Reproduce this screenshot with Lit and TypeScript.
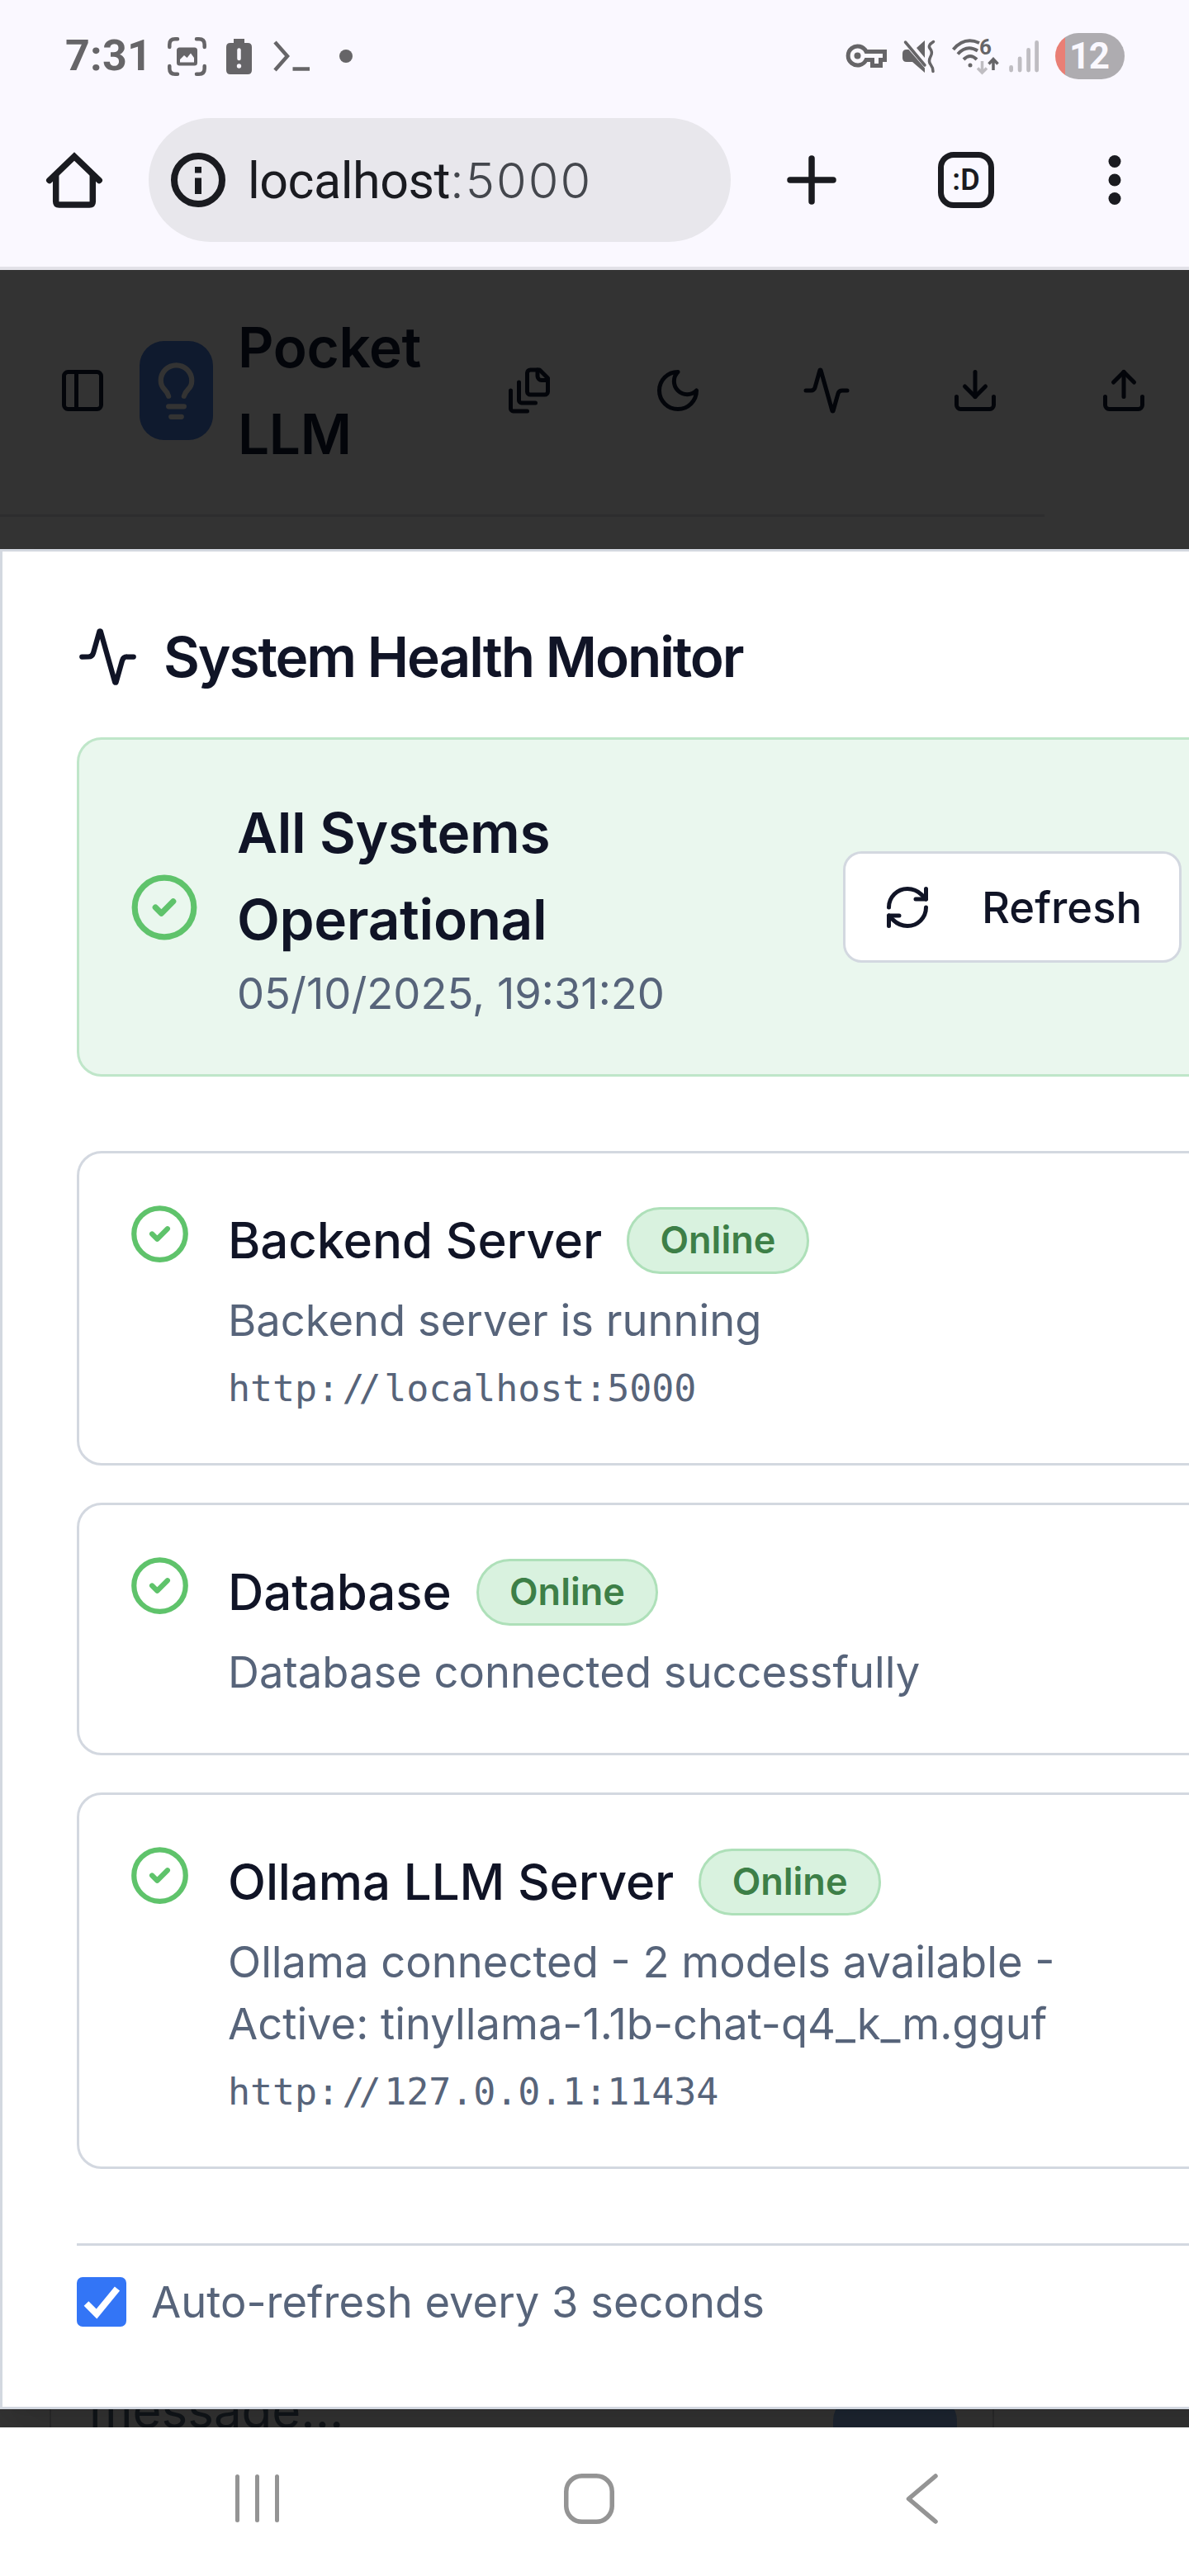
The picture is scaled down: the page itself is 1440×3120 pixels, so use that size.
import { LitElement, html, css, svg, nothing } from "lit";
import { customElement, property } from "lit/decorators.js";

const shapes: Record<string, unknown> = {
  panel: svg`<rect width="18" height="18" x="3" y="3" rx="2"/><path d="M9 3v18"/>`,
  bulb: svg`<path d="M15 14c.2-1 .7-1.7 1.5-2.5 1-.9 1.5-2.2 1.5-3.5A6 6 0 0 0 6 8c0 1 .2 2.2 1.5 3.5.7.7 1.3 1.5 1.5 2.5"/><path d="M9 18h6"/><path d="M10 22h4"/>`,
  files: svg`<path d="M21 7h-3a2 2 0 0 1-2-2V2"/><path d="M21 6v6.5c0 .8-.7 1.5-1.5 1.5h-7c-.8 0-1.5-.7-1.5-1.5v-9c0-.8.7-1.5 1.5-1.5H17Z"/><path d="M7 8v8.8c0 .3.2.6.4.8.2.2.5.4.8.4H15"/><path d="M3 12v8.8c0 .3.2.6.4.8.2.2.5.4.8.4H11"/>`,
  moon: svg`<path d="M12 3a6 6 0 0 0 9 9 9 9 0 1 1-9-9Z"/>`,
  activity: svg`<path d="M22 12h-2.48a2 2 0 0 0-1.93 1.46l-2.35 8.36a.25.25 0 0 1-.48 0L9.24 2.18a.25.25 0 0 0-.48 0l-2.35 8.36A2 2 0 0 1 4.49 12H2"/>`,
  download: svg`<path d="M21 15v4a2 2 0 0 1-2 2H5a2 2 0 0 1-2-2v-4"/><path d="m7 10 5 5 5-5"/><path d="M12 15V3"/>`,
  upload: svg`<path d="M21 15v4a2 2 0 0 1-2 2H5a2 2 0 0 1-2-2v-4"/><path d="m17 8-5-5-5 5"/><path d="M12 3v12"/>`,
  check: svg`<circle cx="12" cy="12" r="10"/><path d="m9 12 2 2 4-4"/>`,
  refresh: svg`<path d="M3 12a9 9 0 0 1 9-9 9.75 9.75 0 0 1 6.74 2.74L21 8"/><path d="M21 3v5h-5"/><path d="M21 12a9 9 0 0 1-9 9 9.75 9.75 0 0 1-6.74-2.74L3 16"/><path d="M8 16H3v5"/>`,
};

@customElement("line-icon")
export class LineIcon extends LitElement {
  @property() name = "";
  static styles = css`
    :host { display: block; flex: none; }
    svg { display: block; width: 100%; height: 100%; }
  `;
  render() {
    return html`<svg viewBox="0 0 24 24" fill="none" stroke="currentColor" stroke-width="2"
      stroke-linecap="round" stroke-linejoin="round">${shapes[this.name]}</svg>`;
  }
}

@customElement("browser-bar")
export class BrowserBar extends LitElement {
  static styles = css`
    :host { display: block; height: 323px; background: #faf8ff; border-bottom: 4px solid #e2e1e8; font-family: Roboto, "Liberation Sans", sans-serif; }
    svg { display: block; flex: none; overflow: visible; }
    .status { display: flex; align-items: center; justify-content: space-between; height: 136px; padding: 0 78px 0 79px; color: #666568; }
    .left, .right { display: flex; align-items: center; }
    .clock { width: 124px; font-size: 52px; font-weight: 700; line-height: 60px; letter-spacing: 0.2px; white-space: nowrap; }
    .alert { margin-left: 24px; }
    .prompt { margin-left: 26px; }
    .dot { margin-left: 36px; width: 16px; height: 16px; border-radius: 50%; background: currentColor; }
    .mute { margin-left: 19px; }
    .wifi { margin-left: 21px; }
    .six { font-size: 26px; font-weight: 700; }
    .signal { margin-left: 12px; }
    .battery { margin-left: 20px; width: 84px; height: 56px; box-sizing: border-box; border-radius: 28px; background: linear-gradient(90deg, #e97f75 12.5px, #aeacb0 12.5px); color: #faf8ff; font-size: 44px; font-weight: 700; line-height: 57px; padding-left: 17px; letter-spacing: -1.5px; }
    .tools { display: flex; align-items: center; height: 150px; padding-top: 7px; padding-left: 56px; color: #1a1b20; }
    .pill { display: flex; align-items: center; gap: 27px; box-sizing: border-box; margin-left: 56px; width: 705px; height: 150px; border-radius: 75px; background: #e8e7ec; padding-left: 27px; font-size: 61px; white-space: nowrap; }
    .host { letter-spacing: -0.5px; }
    .port { color: #44474d; font-family: Inter, Roboto, sans-serif; font-size: 59.5px; font-weight: 350; letter-spacing: 2px; }
    .plus { margin-left: 68px; }
    .tab { display: flex; align-items: center; justify-content: center; box-sizing: border-box; margin-left: 123px; width: 68px; height: 68px; border: 7.5px solid currentColor; border-radius: 19px; font-size: 36px; font-weight: 600; }
    .more { margin-left: 138px; }
  `;
  render() {
    return html`
      <div class="status">
        <div class="left">
          <span class="clock">7:31</span>
          <svg width="47" height="47" viewBox="0 0 47 47" fill="none" stroke="currentColor" stroke-width="4.5" stroke-linecap="round">
            <path d="M2.3 12V9Q2.3 2.3 9 2.3H12M35 2.3H38Q44.7 2.3 44.7 9V12M44.7 35V38Q44.7 44.7 38 44.7H35M12 44.7H9Q2.3 44.7 2.3 38V35"/>
            <rect x="11" y="12.5" width="25" height="22" rx="3.5" fill="currentColor" stroke="none"/>
            <path d="M15 30.500V27L20 22L23.500 25L28 19.500L32 25V30.500Z" fill="#faf8ff" stroke="none"/>
          </svg>
          <svg class="alert" width="31" height="43" viewBox="0 0 31 43">
            <path fill="currentColor" d="M9 0H22V5H26Q31 5 31 10V38Q31 43 26 43H5Q0 43 0 38V10Q0 5 5 5H9Z"/>
            <path d="M15.500 13.500V24" stroke="#faf8ff" stroke-width="4.500" stroke-linecap="round"/>
            <circle cx="15.500" cy="33" r="2.700" fill="#faf8ff"/>
          </svg>
          <svg class="prompt" width="44" height="36" viewBox="0 0 44 36" fill="none" stroke="currentColor" stroke-width="4.500">
            <path d="M2 1L17 18L2 35M23.500 33.500H44"/>
          </svg>
          <i class="dot"></i>
        </div>
        <div class="right">
          <svg width="49" height="28" viewBox="0 0 49 28" fill="none" stroke="currentColor" stroke-width="5">
            <path d="M24 8.500H46.500V18.500H41.500V25.500H31.500V18.500H24A11.500 11.500 0 1 1 24 8.500Z"/>
            <circle cx="13.500" cy="13.500" r="4" fill="currentColor" stroke="none"/>
          </svg>
          <svg class="mute" width="39" height="39" viewBox="0 0 39 39" fill="none">
            <path fill="currentColor" d="M5 11H7.500L27 33.500V39L12 26H5Q0 26 0 21V16Q0 11 5 11ZM27 0V21L17 9Z"/>
            <path d="M3.500 2L27 30" stroke="currentColor" stroke-width="3.500" stroke-linecap="round"/>
            <path d="M37.500 1.500Q30 6 33.500 10T34 19.500T34 29T37 37.500" stroke="currentColor" stroke-width="3.500" stroke-linecap="round"/>
          </svg>
          <svg class="wifi" width="57" height="43" viewBox="0 0 57 43" fill="none" stroke="currentColor" stroke-width="4">
            <path d="M1.500 13Q15 -3 33 5M7 18.500Q18 6.500 31 14.500M14 25Q22 17 30 25"/>
            <circle cx="22" cy="32" r="2.500" fill="currentColor" stroke="none"/>
            <text class="six" x="33" y="19" fill="currentColor" stroke="none">6</text>
            <path d="M36.500 27V41M31 35.500L36.500 41L42 35.500" stroke="#bfbdc2" stroke-width="3.500"/>
            <path d="M50 38V24.500M44.500 30.500L50 24.500L55.500 30.500" stroke-width="3.500"/>
          </svg>
          <svg class="signal" width="36" height="39" viewBox="0 0 36 39" stroke="#bfbdc2" stroke-width="4.800" stroke-linecap="round">
            <path d="M2.600 32.500V36M13.100 22V36M23.600 11.500V36M33.600 2.500V36"/>
          </svg>
          <div class="battery">12</div>
        </div>
      </div>
      <div class="tools">
        <svg width="68" height="68" viewBox="0 0 68 68" fill="none" stroke="currentColor" stroke-width="7.5" stroke-linecap="round">
          <path d="M3.800 34.500L34 5.500L64.200 34.500" stroke-linejoin="miter"/>
          <path d="M11.700 29V60Q11.700 64 15.700 64H52.300Q56.300 64 56.300 60V29"/>
        </svg>
        <div class="pill">
          <svg width="66" height="66" viewBox="0 0 66 66" fill="none" stroke="currentColor" stroke-width="8">
            <circle cx="33" cy="33" r="29"/><path d="M33 17V24.500M33 30.500V50"/>
          </svg>
          <span><span class="host">localhost</span><span class="port">:5000</span></span>
        </div>
        <svg class="plus" width="60" height="60" viewBox="0 0 60 60" stroke="currentColor" stroke-width="7.500" stroke-linecap="round">
          <path d="M30 4V56M4 30H56"/>
        </svg>
        <div class="tab">:D</div>
        <svg class="more" width="16" height="60" viewBox="0 0 16 60" fill="currentColor">
          <circle cx="8" cy="7.500" r="7.500"/><circle cx="8" cy="30" r="7.500"/><circle cx="8" cy="52.500" r="7.500"/>
        </svg>
      </div>
    `;
  }
}

@customElement("service-card")
export class ServiceCard extends LitElement {
  @property() name = "";
  @property() message = "";
  @property() address = "";
  static styles = css`
    :host { display: flex; gap: 45px; border: 3px solid #d3d8e0; border-radius: 30px; padding: 60px; background: #fff; }
    .icon { width: 75px; height: 75px; color: #5fc36b; }
    .head { display: flex; align-items: center; gap: 30px; height: 90px; }
    .name { font-size: 60px; font-weight: 500; line-height: 90px; letter-spacing: -0.12px; color: #101426; white-space: nowrap; }
    .badge { border: 3px solid #aee0b9; border-radius: 60px; background: #d9f2df; color: #3d7f47; padding: 7.5px 37.5px; font-size: 45px; font-weight: 600; line-height: 60px; }
    .message { width: 1030px; margin-top: 15px; font-size: 52.5px; line-height: 75px; color: #57647a; }
    .address { margin-top: 15px; font-family: "DejaVu Sans Mono", monospace; font-size: 45px; line-height: 60px; letter-spacing: -0.09px; color: #57647a; white-space: nowrap; }
    .slashes { letter-spacing: -7px; margin: 0 10.5px 0 3.5px; }
  `;
  render() {
    const [scheme, rest] = this.address.split("//");
    return html`
      <line-icon class="icon" name="check"></line-icon>
      <div>
        <div class="head"><span class="name">${this.name}</span><span class="badge">Online</span></div>
        <div class="message">${this.message}</div>
        ${this.address
          ? html`<div class="address">${scheme}<span class="slashes">//</span>${rest}</div>`
          : nothing}
      </div>
    `;
  }
}

@customElement("health-dialog")
export class HealthDialog extends LitElement {
  static styles = css`
    :host { display: block; box-sizing: border-box; width: 1600px; border: 3px solid #d3d8e0; padding: 90px; background: #fff; color: #101426; box-shadow: 0 38px 56px -11px rgba(0, 0, 0, 0.1), 0 15px 22px -15px rgba(0, 0, 0, 0.1); }
    .title { display: flex; align-items: center; gap: 30px; height: 75px; font-size: 67.5px; font-weight: 600; line-height: 67.5px; letter-spacing: -2.1px; white-space: nowrap; }
    .title-icon { width: 75px; height: 75px; }
    .summary { display: flex; align-items: center; margin-top: 60px; padding: 60px; border: 3px solid #bfe6c9; border-radius: 30px; background: #eaf7ee; }
    .ok { width: 86px; height: 86px; color: #5fc36b; }
    .overall { flex: none; width: 734px; margin-left: 45px; }
    .state { width: 500px; font-size: 67.5px; font-weight: 600; line-height: 105px; letter-spacing: -0.35px; }
    .time { font-size: 52.5px; line-height: 75px; color: #57647a; }
    .button { display: flex; flex: none; align-items: center; gap: 60px; box-sizing: border-box; height: 135px; padding: 0 45px; border: 3px solid #d3d8e0; border-radius: 22.5px; background: #fff; font-size: 52.5px; font-weight: 500; }
    .button-icon { width: 60px; height: 60px; }
    .services { display: flex; flex-direction: column; gap: 45px; margin: 90px 0; }
    .footer { display: flex; align-items: center; gap: 30px; border-top: 3px solid #d3d8e0; padding-top: 30px; height: 75px; font-size: 52.5px; color: #57647a; }
    .box { display: block; width: 60px; height: 60px; }
  `;
  render() {
    return html`
      <div class="title"><line-icon class="title-icon" name="activity"></line-icon>System Health Monitor</div>
      <div class="summary">
        <line-icon class="ok" name="check"></line-icon>
        <div class="overall">
          <div class="state">All Systems Operational</div>
          <div class="time">05/10/2025, 19:31:20</div>
        </div>
        <div class="button"><line-icon class="button-icon" name="refresh"></line-icon>Refresh</div>
      </div>
      <div class="services">
        <service-card name="Backend Server" message="Backend server is running" address="http://localhost:5000"></service-card>
        <service-card name="Database" message="Database connected successfully"></service-card>
        <service-card name="Ollama LLM Server" message="Ollama connected - 2 models available - Active: tinyllama-1.1b-chat-q4_k_m.gguf" address="http://127.0.0.1:11434"></service-card>
      </div>
      <div class="footer">
        <svg class="box" viewBox="0 0 60 60"><rect width="60" height="60" rx="7" fill="#3375f6"/><path d="M11.500 32L24 44.500L49 14" fill="none" stroke="#fff" stroke-width="8"/></svg>
        Auto-refresh every 3 seconds
      </div>
    `;
  }
}

@customElement("app-root")
export class AppRoot extends LitElement {
  static styles = css`
    :host { display: flex; flex-direction: column; width: 1440px; height: 3120px; overflow: hidden; background: #fff; font-family: Inter, "Liberation Sans", sans-serif; }
    .page { position: relative; display: flex; flex-direction: column; justify-content: space-between; height: 2613px; background: #333; overflow: hidden; }
    .header { display: flex; align-items: center; box-sizing: border-box; width: 1265px; height: 299px; padding: 0 0 4px 70px; border-bottom: 3px solid #2d2d2e; color: #03050a; }
    .icon { width: 60px; height: 60px; }
    .logo { display: flex; flex: none; align-items: center; justify-content: center; margin-left: 39px; width: 89px; height: 120px; border-radius: 30px; background: #0f1a2e; color: #333; }
    .bulb { width: 75px; height: 75px; }
    .brand { flex: none; margin-left: 30px; width: 323px; font-size: 67.5px; font-weight: 600; line-height: 105px; letter-spacing: -0.35px; }
    .brand-text { display: block; width: 240px; }
    .actions { display: flex; flex: none; gap: 120px; }
    .composer { display: flex; justify-content: space-between; align-items: flex-end; box-sizing: border-box; margin-left: 60px; width: 1144px; height: 62px; padding: 0 43px 0 46px; border: solid #2a2a2b; border-width: 0 2px; }
    .hint { margin-bottom: -24px; font-size: 60px; line-height: 90px; color: #111519; }
    .send { width: 150px; height: 38px; border-radius: 30px 30px 0 0; background: #1d2531; }
    .dialog { position: absolute; left: 0; top: 338px; }
    .nav { display: flex; align-items: center; height: 180px; padding: 0 0 8px 285px; box-sizing: border-box; color: #949494; }
    .nav-home { margin-left: 345px; }
    .nav-back { margin-left: 353px; }
  `;
  render() {
    return html`
      <browser-bar></browser-bar>
      <div class="page">
        <div class="header">
          <line-icon class="icon" name="panel"></line-icon>
          <div class="logo"><line-icon class="bulb" name="bulb"></line-icon></div>
          <div class="brand"><span class="brand-text">Pocket LLM</span></div>
          <div class="actions">
            ${["files", "moon", "activity", "download", "upload"].map(
              (n) => html`<line-icon class="icon" name=${n}></line-icon>`
            )}
          </div>
        </div>
        <div class="composer"><span class="hint">message...</span><div class="send"></div></div>
        <health-dialog class="dialog"></health-dialog>
      </div>
      <div class="nav">
        <svg width="53" height="58" viewBox="0 0 53 58" stroke="currentColor" stroke-width="5" stroke-linecap="round"><path d="M2.500 2.500V55.500M26.500 2.500V55.500M50.500 2.500V55.500"/></svg>
        <svg class="nav-home" width="61" height="61" viewBox="0 0 61 61" fill="none" stroke="currentColor" stroke-width="5.500"><rect x="2.750" y="2.750" width="55.500" height="55.500" rx="19"/></svg>
        <svg class="nav-back" width="39" height="61" viewBox="0 0 39 61" fill="none" stroke="currentColor" stroke-width="5.500" stroke-linecap="round" stroke-linejoin="round"><path d="M36 3L3.500 30.500L36 58"/></svg>
      </div>
    `;
  }
}
